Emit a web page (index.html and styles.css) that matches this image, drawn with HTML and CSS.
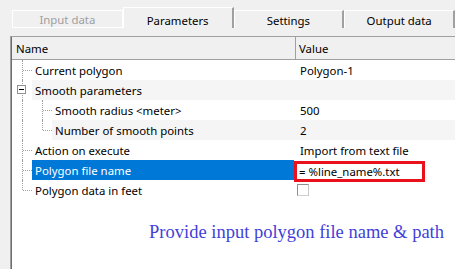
FILE: index.html
```html
<!DOCTYPE html>
<html lang="en">
<head>
<meta charset="UTF-8">
<meta name="viewport" content="width=device-width, initial-scale=1.0">
<title>Polygon parameters</title>
<link rel="stylesheet" href="styles.css">
</head>
<body>
<div class="tabs">
<div class="tab disabled">Input data</div>
<div class="tab active">Parameters</div>
<div class="tab">Settings</div>
<div class="tab last">Output data</div>
</div>
<div class="grid">
<div class="head">
<div class="head-name">Name</div>
<div class="head-value">Value</div>
</div>

<div class="row">
<div class="name"><span class="branch full tick"></span><span class="label">Current polygon</span></div>
<div class="value">Polygon-1</div>
</div>

<div class="row category">
<div class="name"><span class="branch full"><span class="expander"></span></span><span class="label">Smooth parameters</span></div>
<div class="value"></div>
</div>

<div class="row">
<div class="name"><span class="branch full"></span><span class="branch full tick"></span><span class="label">Smooth radius &lt;meter&gt;</span></div>
<div class="value">500</div>
</div>

<div class="row shaded">
<div class="name"><span class="branch full"></span><span class="branch half tick"></span><span class="label">Number of smooth points</span></div>
<div class="value">2</div>
</div>

<div class="row">
<div class="name"><span class="branch full tick"></span><span class="label">Action on execute</span></div>
<div class="value">Import from text file</div>
</div>

<div class="row selected">
<div class="name"><span class="branch full tick"></span><span class="label">Polygon file name</span></div>
<div class="value"><span class="editor">= %line_name%.txt</span></div>
</div>

<div class="row">
<div class="name"><span class="branch half tick"></span><span class="label">Polygon data in feet</span></div>
<div class="value"><span class="checkbox"></span></div>
</div>

<p class="note">Provide input polygon file name &amp; path</p>
</div>
</body>
</html>
```

FILE: styles.css
```css
body {
margin: 0;
background-color: #f0f0f0;
font-family: "Noto Sans", "Segoe UI", sans-serif;
font-size: 11.4px;
color: #000;
overflow: hidden;
}

/* Tab strip */
.tabs {
display: flex;
height: 36px;
padding-left: 12px;
box-sizing: border-box;
}

.tab {
width: 111px;
height: 18px;
margin-top: 10px;
box-sizing: border-box;
border-top: 1px solid #fff;
border-left: 1px solid #fff;
border-right: 2px solid #a0a0a0;
display: flex;
justify-content: center;
align-items: center;
padding-top: 1px;
}

.tab.disabled {
color: #a0a0a0;
border-right: 1px solid #fff;
border-bottom: 1px solid #fff;
}

.tab.active {
margin-top: 7px;
height: 21px;
padding-top: 4px;
}

/* Property grid */
.grid {
margin-left: 10px;
height: 233px;
background-color: #fff;
border-top: 1px solid #a0a0a0;
border-left: 1px solid #a0a0a0;
box-shadow: inset 1px 0 0 #6d6d6d;
padding-left: 1px;
}

.head {
display: flex;
height: 23px;
background-color: #f0f0f0;
border-bottom: 1px solid #a0a0a0;
box-sizing: border-box;
}

.head-name {
width: 284px;
padding-left: 4px;
box-sizing: border-box;
border-right: 1px solid #a0a0a0;
display: flex;
align-items: center;
}

.head-value {
padding-left: 3px;
display: flex;
align-items: center;
}

.row {
display: flex;
height: 20px;
}

.name {
display: flex;
width: 282px;
}

.branch {
position: relative;
width: 20px;
flex-shrink: 0;
}

.branch.full::before,
.branch.half::before {
content: "";
position: absolute;
left: 10px;
top: 0;
border-left: 1px dotted #a0a0a0;
}

.branch.full::before {
bottom: 0;
}

.branch.half::before {
height: 10px;
}

.branch.tick::after {
content: "";
position: absolute;
left: 11px;
top: 10px;
width: 9px;
border-top: 1px dotted #a0a0a0;
}

.expander {
position: absolute;
left: 5px;
top: 5px;
width: 9px;
height: 9px;
box-sizing: border-box;
border: 1px solid #919191;
background-color: #fff;
z-index: 1;
}

.expander::after {
content: "";
position: absolute;
left: 1px;
top: 3px;
width: 5px;
border-top: 1px solid #000;
}

.label {
flex: 1;
padding-left: 3px;
display: flex;
align-items: center;
white-space: nowrap;
}

.value {
flex: 1;
padding-left: 6px;
display: flex;
align-items: center;
}

.category .label,
.category .value,
.shaded .label,
.shaded .value {
background-color: #f5f5f5;
}

.selected .label {
background-color: #0078d7;
color: #fff;
}

.selected .value {
padding-left: 0;
align-items: flex-start;
}

.editor {
width: 131px;
height: 21px;
margin-top: 1px;
box-sizing: border-box;
border: 3px solid #e8111c;
padding-left: 2px;
display: flex;
align-items: center;
background-color: #fff;
}

.checkbox {
width: 12px;
height: 12px;
margin-left: -3px;
margin-top: 4px;
align-self: flex-start;
box-sizing: border-box;
border: 1px solid #8f8f8f;
border-bottom-color: #d0d0d0;
border-right-color: #c8c8c8;
}

.note {
margin: 22px 0 0;
padding-right: 11px;
text-align: right;
font-family: "Liberation Serif", "Times New Roman", serif;
font-size: 18.5px;
line-height: 20px;
color: #3f3fd9;
}
```
